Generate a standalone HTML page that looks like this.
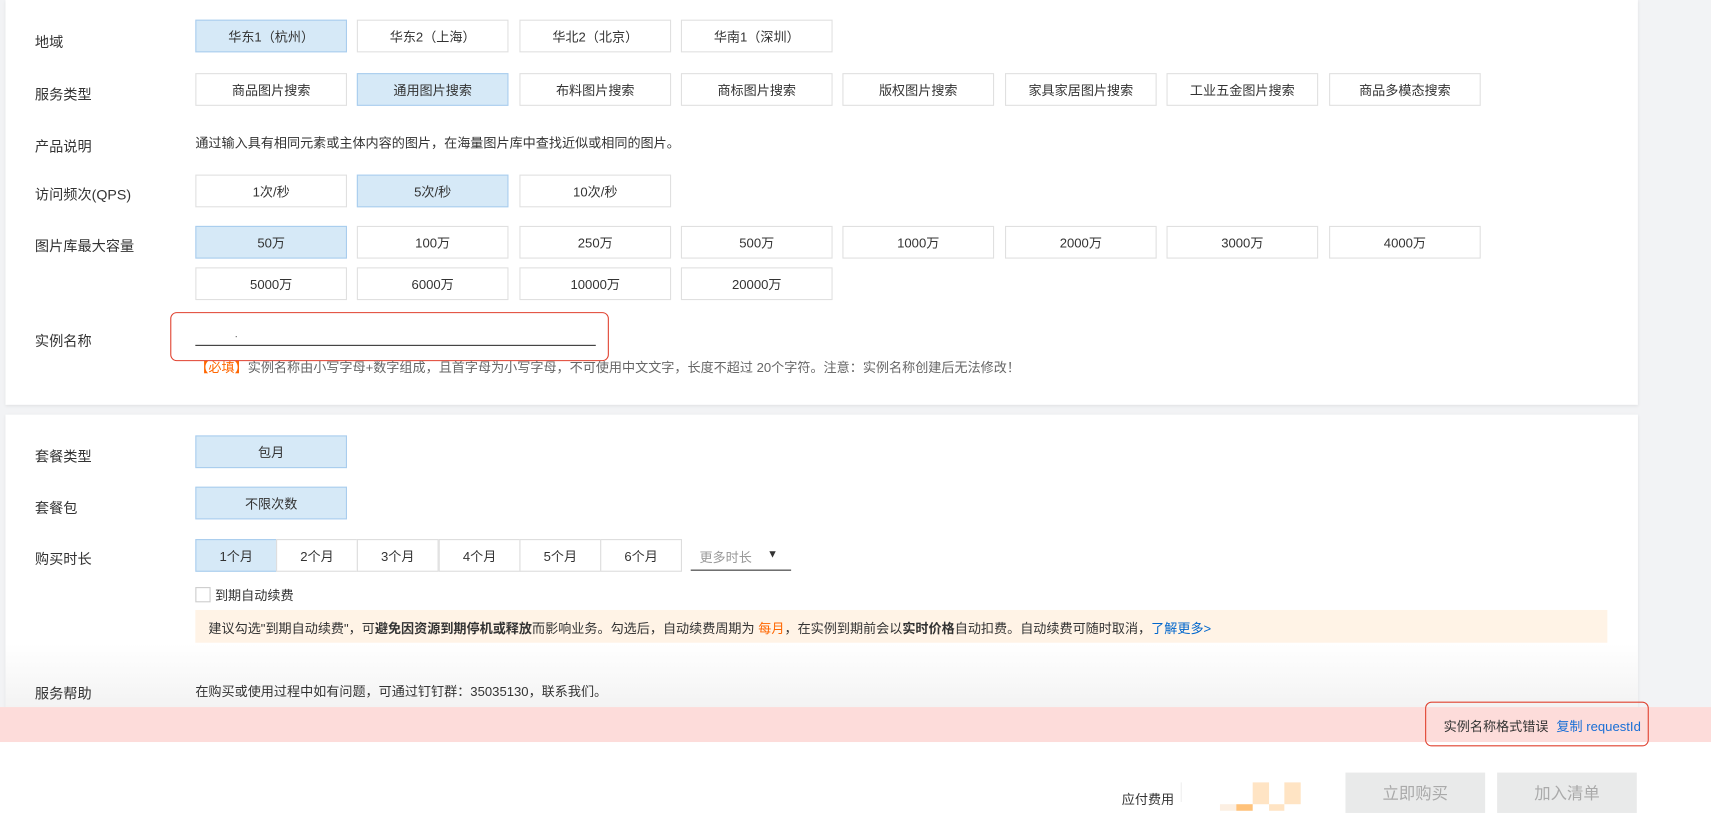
<!DOCTYPE html>
<html><head><meta charset="utf-8"><style>
*{box-sizing:border-box;margin:0;padding:0}
html,body{width:1711px;height:821px;overflow:hidden}
body{background:#fff;font-family:"Liberation Sans","Noto Sans CJK SC",sans-serif;color:#333;position:relative;font-size:12px}
#w{position:absolute;left:0;top:0;width:1568px;height:753px;transform:scale(1.0912);transform-origin:0 0;background:#f2f3f5;overflow:hidden}
.card{position:absolute;background:#fff;box-shadow:0 1px 3px rgba(0,0,0,.08)}
.lbl{position:absolute;left:32px;font-size:13px;color:#333}
.b{position:absolute;width:139px;height:30px;border:1px solid #e0e0e0;background:#fff;font-size:12px;display:flex;align-items:center;justify-content:center;color:#333}
.s{background:#d6e9f7;border-color:#a9cdee}
.t{position:absolute;top:494px;width:75px;height:30px;border:1px solid #ddd;display:flex;align-items:center;justify-content:center;font-size:12px;background:#fff}
.abs{position:absolute}
</style></head><body><div id="w">
<div class="card" style="left:5px;top:0;width:1496px;height:371px"></div>
<div class="card" style="left:5px;top:380px;width:1496px;height:270px;background:linear-gradient(#fff 0,#fff 210px,#f3f3f3 268px)"></div>
<div class="lbl" style="top:28px">地域</div>
<div class="b s" style="left:179px;top:18px">华东1（杭州）</div>
<div class="b" style="left:327px;top:18px">华东2（上海）</div>
<div class="b" style="left:476px;top:18px">华北2（北京）</div>
<div class="b" style="left:624px;top:18px">华南1（深圳）</div>
<div class="lbl" style="top:76px">服务类型</div>
<div class="b" style="left:179px;top:67px">商品图片搜索</div>
<div class="b s" style="left:327px;top:67px">通用图片搜索</div>
<div class="b" style="left:476px;top:67px">布料图片搜索</div>
<div class="b" style="left:624px;top:67px">商标图片搜索</div>
<div class="b" style="left:772px;top:67px">版权图片搜索</div>
<div class="b" style="left:921px;top:67px">家具家居图片搜索</div>
<div class="b" style="left:1069px;top:67px">工业五金图片搜索</div>
<div class="b" style="left:1218px;top:67px">商品多模态搜索</div>
<div class="lbl" style="top:124px">产品说明</div>
<div class="abs" style="left:179px;top:122px;font-size:12px">通过输入具有相同元素或主体内容的图片，在海量图片库中查找近似或相同的图片。</div>
<div class="lbl" style="top:168px">访问频次(QPS)</div>
<div class="b" style="left:179px;top:160px">1次/秒</div>
<div class="b s" style="left:327px;top:160px">5次/秒</div>
<div class="b" style="left:476px;top:160px">10次/秒</div>
<div class="lbl" style="top:215px">图片库最大容量</div>
<div class="b s" style="left:179px;top:207px">50万</div>
<div class="b" style="left:327px;top:207px">100万</div>
<div class="b" style="left:476px;top:207px">250万</div>
<div class="b" style="left:624px;top:207px">500万</div>
<div class="b" style="left:772px;top:207px">1000万</div>
<div class="b" style="left:921px;top:207px">2000万</div>
<div class="b" style="left:1069px;top:207px">3000万</div>
<div class="b" style="left:1218px;top:207px">4000万</div>
<div class="b" style="left:179px;top:245px">5000万</div>
<div class="b" style="left:327px;top:245px">6000万</div>
<div class="b" style="left:476px;top:245px">10000万</div>
<div class="b" style="left:624px;top:245px">20000万</div>
<div class="lbl" style="top:302px">实例名称</div>
<div class="abs" style="left:156px;top:286px;width:402px;height:45px;border:1px solid #e0412f;border-radius:6px"></div>
<div class="abs" style="left:179px;top:316px;width:367px;height:1px;background:#333"></div>
<div class="abs" style="left:216px;top:308px;width:1px;height:1px;background:#555"></div>
<div class="abs" style="left:179px;top:328px;color:#666">
<span style="color:#f60">【必填】</span>实例名称由小写字母+数字组成，且首字母为小写字母，不可使用中文文字，长度不超过 20个字符。注意：实例名称创建后无法修改！</div>
<div class="lbl" style="top:408px">套餐类型</div>
<div class="b s" style="left:179px;top:399px">包月</div>
<div class="lbl" style="top:455px">套餐包</div>
<div class="b s" style="left:179px;top:446px">不限次数</div>
<div class="lbl" style="top:502px">购买时长</div>
<div class="t" style="left:179px;background:#d6e9f7;border-color:#a9cdee">1个月</div>
<div class="t" style="left:253px">2个月</div>
<div class="t" style="left:327px">3个月</div>
<div class="t" style="left:402px">4个月</div>
<div class="t" style="left:476px">5个月</div>
<div class="t" style="left:550px">6个月</div>
<div class="abs" style="left:633px;top:494px;width:92px;height:29px;border-bottom:1px solid #333;padding:8px 8px;color:#999">更多时长<span style="position:absolute;left:70px;top:9px;color:#333;font-size:10px">▼</span></div>
<div class="abs" style="left:179px;top:538px;width:14px;height:14px;border:1px solid #ccc"></div>
<div class="abs" style="left:197px;top:537px">到期自动续费</div>
<div class="abs" style="left:179px;top:559px;width:1294px;height:30px;background:#fff3e6;padding:8px 12px;font-size:12px">建议勾选"到期自动续费"，可<b>避免因资源到期停机或释放</b>而影响业务。勾选后，自动续费周期为 <span style="color:#f60">每月</span>，在实例到期前会以<b>实时价格</b>自动扣费。自动续费可随时取消，<span style="color:#06c">了解更多&gt;</span></div>
<div class="lbl" style="top:625px">服务帮助</div>
<div class="abs" style="left:179px;top:625px">在购买或使用过程中如有问题，可通过钉钉群：35035130，联系我们。</div>
<div class="abs" style="left:0;top:680px;width:1568px;height:80px;background:#fff"></div>
<div class="abs" style="left:0;top:648px;width:1568px;height:32px;background:#fddcda"></div>
<div class="abs" style="left:1306px;top:643px;width:205px;height:41px;border:1px solid #e0412f;border-radius:6px;padding:13px 0 0 16px;color:#333">实例名称格式错误 <span style="color:#1a6fd6;margin-left:4px">复制 requestId</span></div>
<div class="abs" style="left:1028px;top:724px">应付费用</div>
<div class="abs" style="left:1082px;top:717px;width:1px;height:18px;background:#eee"></div>
<div class="abs" style="left:1148px;top:717px;width:15px;height:20px;background:#ffe4c4"></div>
<div class="abs" style="left:1177px;top:717px;width:15px;height:20px;background:#ffe4c4"></div>
<div class="abs" style="left:1118px;top:737px;width:15px;height:6px;background:#fcefe2"></div>
<div class="abs" style="left:1133px;top:737px;width:15px;height:6px;background:#ffc27a"></div>
<div class="abs" style="left:1163px;top:737px;width:14px;height:6px;background:#ffe4c4"></div>
<div class="abs" style="left:1233px;top:708px;width:128px;height:37px;background:#e9eaea;color:#aaa;font-size:15px;display:flex;align-items:center;justify-content:center">立即购买</div>
<div class="abs" style="left:1372px;top:708px;width:128px;height:37px;background:#e9eaea;color:#aaa;font-size:15px;display:flex;align-items:center;justify-content:center">加入清单</div>
</div>
</body></html>
